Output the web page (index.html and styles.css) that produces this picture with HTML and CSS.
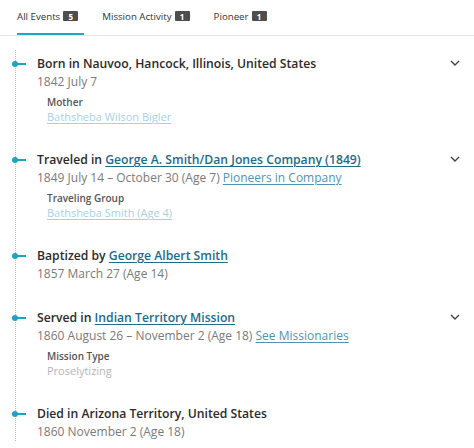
FILE: index.html
```html
<!DOCTYPE html>
<html lang="en">
<head>
<meta charset="utf-8">
<title>Timeline</title>
<link rel="stylesheet" href="styles.css">
</head>
<body>
<nav class="tabs">
  <div class="tab active">All Events <span class="badge">5</span></div>
  <div class="tab">Mission Activity <span class="badge">1</span></div>
  <div class="tab">Pioneer <span class="badge">1</span></div>
</nav>

<div class="timeline">
  <section class="event">
    <div class="title-row">
      <h3 class="title">Born in Nauvoo, Hancock, Illinois, United States</h3>
      <svg class="chevron" viewBox="0 0 10 6" width="10" height="6"><path d="M1 1 L5 5 L9 1" fill="none" stroke="#444" stroke-width="1.4"/></svg>
    </div>
    <div class="date">1842 July 7</div>
    <div class="detail">
      <div class="label">Mother</div>
      <a class="sublink">Bathsheba Wilson Bigler</a>
    </div>
  </section>

  <section class="event">
    <div class="title-row">
      <h3 class="title">Traveled in <a class="link">George A. Smith/Dan Jones Company (1849)</a></h3>
      <svg class="chevron" viewBox="0 0 10 6" width="10" height="6"><path d="M1 1 L5 5 L9 1" fill="none" stroke="#444" stroke-width="1.4"/></svg>
    </div>
    <div class="date">1849 July 14 – October 30 (Age 7) <a class="datelink">Pioneers in Company</a></div>
    <div class="detail">
      <div class="label">Traveling Group</div>
      <a class="sublink">Bathsheba Smith (Age 4)</a>
    </div>
  </section>

  <section class="event">
    <div class="title-row">
      <h3 class="title">Baptized by <a class="link">George Albert Smith</a></h3>
    </div>
    <div class="date">1857 March 27 (Age 14)</div>
  </section>

  <section class="event">
    <div class="title-row">
      <h3 class="title">Served in <a class="link">Indian Territory Mission</a></h3>
      <svg class="chevron" viewBox="0 0 10 6" width="10" height="6"><path d="M1 1 L5 5 L9 1" fill="none" stroke="#444" stroke-width="1.4"/></svg>
    </div>
    <div class="date">1860 August 26 – November 2 (Age 18) <a class="datelink">See Missionaries</a></div>
    <div class="detail">
      <div class="label">Mission Type</div>
      <div class="subtext">Proselytizing</div>
    </div>
  </section>

  <section class="event last">
    <div class="title-row">
      <h3 class="title">Died in Arizona Territory, United States</h3>
    </div>
    <div class="date">1860 November 2 (Age 18)</div>
  </section>
</div>
</body>
</html>
```

FILE: styles.css
```css
* { box-sizing: border-box; }
html, body { margin: 0; padding: 0; background: #fff; }
body {
  font-family: "Open Sans", "Noto Sans", sans-serif;
  color: #333;
  width: 474px;
  height: 448px;
  overflow: hidden;
}

.tabs {
  display: flex;
  gap: 18px;
  padding-left: 17px;
  height: 36px;
  border-bottom: 1px solid #e6e6e6;
}
.tab {
  font-size: 9.7px;
  color: #333;
  display: flex;
  align-items: center;
  gap: 3px;
  padding-right: 6px;
  height: 35px;
  padding-bottom: 1px;
  border-bottom: 2px solid transparent;
}
.tab.active { border-bottom-color: #1fa6cb; }
.badge {
  display: inline-flex;
  align-items: center;
  justify-content: center;
  background: #4d4d4d;
  color: #fff;
  font-size: 8px;
  font-weight: 700;
  width: 15px;
  height: 10px;
  border-radius: 1px;
}

.timeline {
  margin-top: 14px;
  margin-left: 15px;
  border-left: 1px dotted #b9b9b9;
  padding-top: 5px;
}
.event {
  position: relative;
  padding-left: 21px;
  margin-bottom: 26px;
}
.event.last { margin-bottom: 0; }
.event::before {
  content: "";
  position: absolute;
  left: -4px;
  top: 6px;
  width: 6px;
  height: 6px;
  border-radius: 50%;
  background: #1ea2c6;
}
.event::after {
  content: "";
  position: absolute;
  left: 0;
  top: 8px;
  width: 10px;
  height: 2px;
  background: #1ea2c6;
}

.title-row {
  display: flex;
  justify-content: space-between;
  align-items: flex-start;
}
.title {
  margin: 0;
  font-size: 12.2px;
  line-height: 18px;
  font-weight: 600;
  color: #2b2b2b;
}
.chevron {
  margin-top: 5px;
  margin-right: 14px;
  flex: none;
}
.link {
  color: #1c6c8b;
  text-decoration: underline;
  text-decoration-thickness: 1px;
  text-underline-offset: 2px;
}
.date {
  font-size: 12px;
  line-height: 18px;
  color: #7a7a7a;
}
.datelink {
  color: #4f95b1;
  text-decoration: underline;
  text-underline-offset: 2px;
}
.detail {
  padding-left: 10px;
  margin-top: 4px;
}
.label {
  font-size: 10px;
  line-height: 14px;
  font-weight: 600;
  color: #555;
}
.sublink {
  display: block;
  font-size: 11px;
  line-height: 16px;
  color: #a7d2e2;
  text-decoration: underline;
  text-underline-offset: 2px;
}
.subtext {
  font-size: 11px;
  line-height: 16px;
  color: #b5b5b5;
}
```
